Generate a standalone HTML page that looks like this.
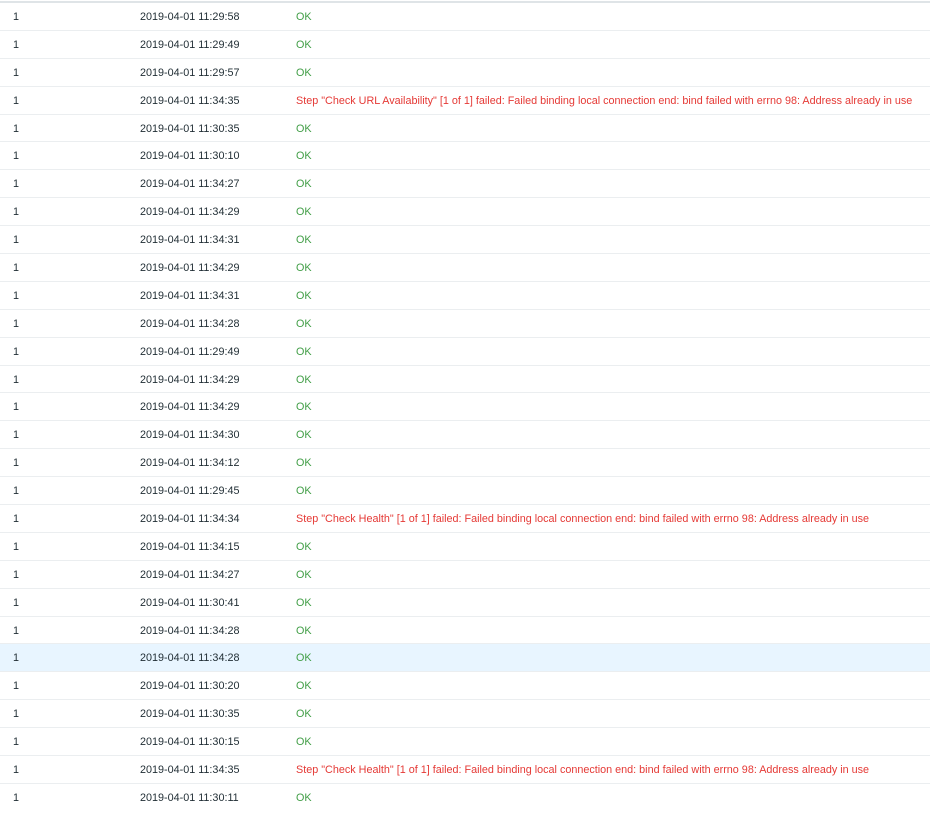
<!DOCTYPE html>
<html><head><style>
body{margin:0;background:#fff;font-family:"Liberation Sans",Arial,sans-serif;font-size:10.8px;color:#1f2c33}
table{border-collapse:collapse;width:930px;border-top:2px solid #dfe4e7;margin-top:1px}
td{height:25.9px;padding:1px 0 0 0;border-bottom:1px solid #ebeef0;white-space:nowrap;vertical-align:middle}
tr:last-child td{border-bottom:none}
td.a{width:127px;padding-left:13px}
td.b{width:156px}
.ok{color:#429e47}.er{color:#e53935}
tr.h td{background:#e8f5ff}
</style></head><body>
<table>
<tr><td class="a">1</td><td class="b">2019-04-01 11:29:58</td><td class="ok">OK</td></tr>
<tr><td class="a">1</td><td class="b">2019-04-01 11:29:49</td><td class="ok">OK</td></tr>
<tr><td class="a">1</td><td class="b">2019-04-01 11:29:57</td><td class="ok">OK</td></tr>
<tr><td class="a">1</td><td class="b">2019-04-01 11:34:35</td><td class="er">Step "Check URL Availability" [1 of 1] failed: Failed binding local connection end: bind failed with errno 98: Address already in use</td></tr>
<tr><td class="a">1</td><td class="b">2019-04-01 11:30:35</td><td class="ok">OK</td></tr>
<tr><td class="a">1</td><td class="b">2019-04-01 11:30:10</td><td class="ok">OK</td></tr>
<tr><td class="a">1</td><td class="b">2019-04-01 11:34:27</td><td class="ok">OK</td></tr>
<tr><td class="a">1</td><td class="b">2019-04-01 11:34:29</td><td class="ok">OK</td></tr>
<tr><td class="a">1</td><td class="b">2019-04-01 11:34:31</td><td class="ok">OK</td></tr>
<tr><td class="a">1</td><td class="b">2019-04-01 11:34:29</td><td class="ok">OK</td></tr>
<tr><td class="a">1</td><td class="b">2019-04-01 11:34:31</td><td class="ok">OK</td></tr>
<tr><td class="a">1</td><td class="b">2019-04-01 11:34:28</td><td class="ok">OK</td></tr>
<tr><td class="a">1</td><td class="b">2019-04-01 11:29:49</td><td class="ok">OK</td></tr>
<tr><td class="a">1</td><td class="b">2019-04-01 11:34:29</td><td class="ok">OK</td></tr>
<tr><td class="a">1</td><td class="b">2019-04-01 11:34:29</td><td class="ok">OK</td></tr>
<tr><td class="a">1</td><td class="b">2019-04-01 11:34:30</td><td class="ok">OK</td></tr>
<tr><td class="a">1</td><td class="b">2019-04-01 11:34:12</td><td class="ok">OK</td></tr>
<tr><td class="a">1</td><td class="b">2019-04-01 11:29:45</td><td class="ok">OK</td></tr>
<tr><td class="a">1</td><td class="b">2019-04-01 11:34:34</td><td class="er">Step "Check Health" [1 of 1] failed: Failed binding local connection end: bind failed with errno 98: Address already in use</td></tr>
<tr><td class="a">1</td><td class="b">2019-04-01 11:34:15</td><td class="ok">OK</td></tr>
<tr><td class="a">1</td><td class="b">2019-04-01 11:34:27</td><td class="ok">OK</td></tr>
<tr><td class="a">1</td><td class="b">2019-04-01 11:30:41</td><td class="ok">OK</td></tr>
<tr><td class="a">1</td><td class="b">2019-04-01 11:34:28</td><td class="ok">OK</td></tr>
<tr class="h"><td class="a">1</td><td class="b">2019-04-01 11:34:28</td><td class="ok">OK</td></tr>
<tr><td class="a">1</td><td class="b">2019-04-01 11:30:20</td><td class="ok">OK</td></tr>
<tr><td class="a">1</td><td class="b">2019-04-01 11:30:35</td><td class="ok">OK</td></tr>
<tr><td class="a">1</td><td class="b">2019-04-01 11:30:15</td><td class="ok">OK</td></tr>
<tr><td class="a">1</td><td class="b">2019-04-01 11:34:35</td><td class="er">Step "Check Health" [1 of 1] failed: Failed binding local connection end: bind failed with errno 98: Address already in use</td></tr>
<tr><td class="a">1</td><td class="b">2019-04-01 11:30:11</td><td class="ok">OK</td></tr>
</table>
</body></html>
